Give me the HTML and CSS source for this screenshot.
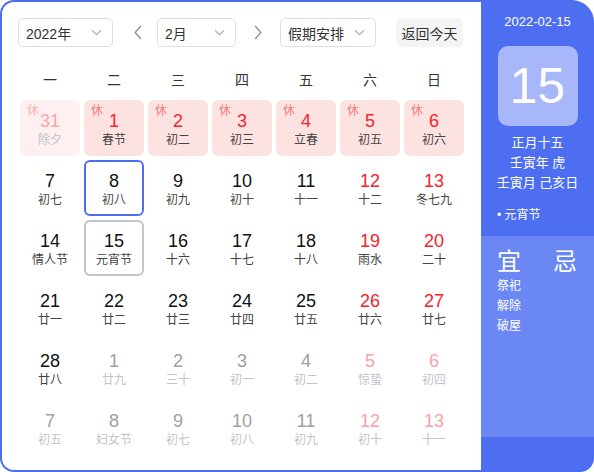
FILE: index.html
```html
<!DOCTYPE html>
<html>
<head>
    <meta charset="UTF-8">
    <title>万年历</title>
    <link rel="stylesheet" href="styles.css">
</head>
<body>
    <div class="calendar">
        <div class="main">
            <div class="toolbar">
                <div class="select year-select"><span>2022年</span><svg class="chev" viewBox="0 0 12 8"><path d="M1 1.5l5 5 5-5"/></svg></div>
                <div class="arrow"><svg viewBox="0 0 10 16"><path d="M8 1L2 8l6 7"/></svg></div>
                <div class="select month-select"><span>2月</span><svg class="chev" viewBox="0 0 12 8"><path d="M1 1.5l5 5 5-5"/></svg></div>
                <div class="arrow"><svg viewBox="0 0 10 16"><path d="M2 1l6 7-6 7"/></svg></div>
                <div class="select holiday-select"><span>假期安排</span><svg class="chev" viewBox="0 0 12 8"><path d="M1 1.5l5 5 5-5"/></svg></div>
                <button class="today-btn">返回今天</button>
            </div>

            <div class="week">
                <span>一</span><span>二</span><span>三</span><span>四</span><span>五</span><span>六</span><span>日</span>
            </div>

            <div class="days" id="days"></div>
        </div>

        <div class="side">
            <div class="side-top">
                <div class="side-date">2022-02-15</div>
                <div class="big-day">15</div>
                <div class="lunar-line">正月十五</div>
                <div class="lunar-line">壬寅年 虎</div>
                <div class="lunar-line">壬寅月 己亥日</div>
                <div class="festival">• 元宵节</div>
            </div>
            <div class="side-yiji">
                <div class="yiji-col">
                    <div class="yiji-title">宜</div>
                    <div class="yiji-item">祭祀</div>
                    <div class="yiji-item">解除</div>
                    <div class="yiji-item">破屋</div>
                </div>
                <div class="yiji-col">
                    <div class="yiji-title">忌</div>
                </div>
            </div>
        </div>
    </div>

    <script>
        // [日期, 农历, 类型] 类型: o=其他月份, h=休, w=周末
        const days = [
            ['31', '除夕', 'o h'], ['1', '春节', 'h'], ['2', '初二', 'h'], ['3', '初三', 'h'], ['4', '立春', 'h'], ['5', '初五', 'h'], ['6', '初六', 'h'],
            ['7', '初七', ''], ['8', '初八', 'selected'], ['9', '初九', ''], ['10', '初十', ''], ['11', '十一', ''], ['12', '十二', 'w'], ['13', '冬七九', 'w'],
            ['14', '情人节', ''], ['15', '元宵节', 'today'], ['16', '十六', ''], ['17', '十七', ''], ['18', '十八', ''], ['19', '雨水', 'w'], ['20', '二十', 'w'],
            ['21', '廿一', ''], ['22', '廿二', ''], ['23', '廿三', ''], ['24', '廿四', ''], ['25', '廿五', ''], ['26', '廿六', 'w'], ['27', '廿七', 'w'],
            ['28', '廿八', ''], ['1', '廿九', 'o'], ['2', '三十', 'o'], ['3', '初一', 'o'], ['4', '初二', 'o'], ['5', '惊蛰', 'o w'], ['6', '初四', 'o w'],
            ['7', '初五', 'o'], ['8', '妇女节', 'o'], ['9', '初七', 'o'], ['10', '初八', 'o'], ['11', '初九', 'o'], ['12', '初十', 'o w'], ['13', '十一', 'o w']
        ];

        const box = document.getElementById('days');
        days.forEach(([num, lunar, type]) => {
            const cell = document.createElement('div');
            cell.className = 'day';
            type.split(' ').filter(Boolean).forEach(t => cell.classList.add(t));
            if (cell.classList.contains('h')) {
                const tag = document.createElement('span');
                tag.className = 'rest';
                tag.textContent = '休';
                cell.appendChild(tag);
            }
            const n = document.createElement('div');
            n.className = 'num';
            n.textContent = num;
            const l = document.createElement('div');
            l.className = 'lunar';
            l.textContent = lunar;
            cell.appendChild(n);
            cell.appendChild(l);
            box.appendChild(cell);
        });
    </script>
</body>
</html>
```

FILE: styles.css
```css
body {
    margin: 0;
    font-family: 'Liberation Sans', 'Noto Sans CJK SC', sans-serif;
    color: #333;
    background: #fff;
}

.calendar {
    width: 594px;
    height: 472px;
    display: flex;
    background: #4e6ef2;
    border-radius: 14px 22px 14px 14px;
    overflow: hidden;
}

.main {
    flex: none;
    box-sizing: border-box;
    width: 479px;
    margin: 2px 0 2px 2px;
    padding: 16px 0 0 16px;
    background: #fff;
    border-radius: 12px 0 0 12px;
}

.toolbar {
    display: flex;
    align-items: center;
    height: 29px;
}

.select {
    box-sizing: border-box;
    height: 29px;
    border: 1px solid #dcdfe6;
    border-radius: 5px;
    display: flex;
    align-items: center;
    justify-content: space-between;
    padding: 0 10px 0 7px;
    font-size: 14px;
}

.year-select { width: 95px; }
.month-select { width: 79px; }
.holiday-select { width: 96px; }

.chev {
    width: 11px;
    height: 7px;
    fill: none;
    stroke: #a8abb2;
    stroke-width: 1.4;
}

.arrow {
    width: 44px;
    display: flex;
    justify-content: center;
}

.arrow svg {
    width: 10px;
    height: 15px;
    fill: none;
    stroke: #909399;
    stroke-width: 1.5;
    margin-left: 5px;
}

.arrow:nth-child(4) svg {
    margin-left: 0;
}

.today-btn {
    margin-left: 20px;
    width: 67px;
    height: 29px;
    border: none;
    border-radius: 5px;
    background: #f4f4f5;
    color: #333;
    font-family: inherit;
    font-size: 14px;
    padding: 0;
}

.week,
.days {
    display: grid;
    grid-template-columns: repeat(7, 60px);
    column-gap: 4px;
    margin-left: 2px;
}

.week {
    margin-top: 18px;
    height: 35px;
    line-height: 30px;
    text-align: center;
    font-size: 14px;
}

.days {
    row-gap: 4px;
    grid-auto-rows: 56px;
}

.day {
    position: relative;
    box-sizing: border-box;
    border-radius: 6px;
    text-align: center;
    padding-top: 11px;
}

.num {
    font-size: 18px;
    line-height: 20px;
    color: #111;
}

.lunar {
    font-size: 12px;
    line-height: 18px;
    color: #444;
}

.rest {
    position: absolute;
    left: 7px;
    top: 3px;
    font-size: 12px;
    line-height: 16px;
    color: #f37b7b;
}

.day.h {
    background: #fde2e2;
}

.day.h .num,
.day.w .num {
    color: #f5222d;
}

.day.selected {
    border: 2px solid #4e6ef2;
    padding-top: 9px;
}

.day.today {
    border: 2px solid #c0c4cc;
    padding-top: 9px;
}

.day.o .num {
    color: #a0a0a0;
}

.day.o .lunar {
    color: #c0c4cc;
}

.day.o.w .num {
    color: #f8a3a6;
}

.day.o.h {
    background: #fef0f0;
}

.day.o.h .num {
    color: #f9a5a5;
}

.day.o.h .rest {
    color: #f9b4b4;
}

.side {
    flex: 1;
    min-width: 0;
    display: flex;
    flex-direction: column;
    color: #fff;
}

.side-top {
    height: 236px;
    padding-top: 14px;
    box-sizing: border-box;
    text-align: center;
    white-space: nowrap;
}

.side-date {
    font-size: 13px;
    line-height: 16px;
}

.big-day {
    width: 80px;
    height: 80px;
    margin: 16px auto 7px;
    background: rgba(255, 255, 255, 0.5);
    border-radius: 10px;
    font-size: 50px;
    line-height: 80px;
}

.lunar-line {
    font-size: 13px;
    line-height: 20px;
}

.festival {
    margin-top: 14px;
    padding-left: 16px;
    text-align: left;
    font-size: 12px;
    line-height: 16px;
}

.side-yiji {
    height: 201px;
    box-sizing: border-box;
    background: #6a87f4;
    padding: 12px 0 0 16px;
    display: flex;
}

.yiji-col {
    flex: none;
    width: 56px;
}

.yiji-title {
    font-size: 24px;
    line-height: 28px;
}

.yiji-item {
    font-size: 12px;
    line-height: 20px;
}
```
